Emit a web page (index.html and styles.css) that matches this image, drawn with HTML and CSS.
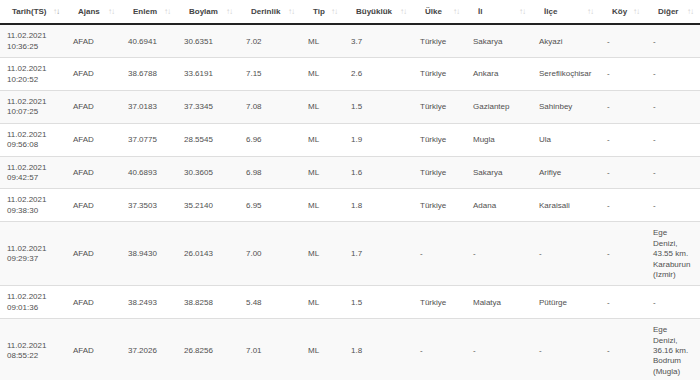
FILE: index.html
```html
<!DOCTYPE html>
<html lang="tr">
<head>
<meta charset="utf-8">
<title>Depremler</title>
<link rel="stylesheet" href="styles.css">
</head>
<body>
<table class="quakes">
  <colgroup>
    <col class="c1"><col class="c2"><col class="c3"><col class="c4"><col class="c5"><col class="c6">
    <col class="c7"><col class="c8"><col class="c9"><col class="c10"><col class="c11"><col class="c12">
  </colgroup>
  <thead>
    <tr>
      <th class="sorted">Tarih(TS)<span class="sort"><i class="up">↑</i><i class="dn">↓</i></span></th>
      <th>Ajans<span class="sort"><i class="up">↑</i><i class="dn">↓</i></span></th>
      <th>Enlem<span class="sort"><i class="up">↑</i><i class="dn">↓</i></span></th>
      <th>Boylam<span class="sort"><i class="up">↑</i><i class="dn">↓</i></span></th>
      <th>Derinlik<span class="sort"><i class="up">↑</i><i class="dn">↓</i></span></th>
      <th>Tip<span class="sort"><i class="up">↑</i><i class="dn">↓</i></span></th>
      <th>Büyüklük<span class="sort"><i class="up">↑</i><i class="dn">↓</i></span></th>
      <th>Ülke<span class="sort"><i class="up">↑</i><i class="dn">↓</i></span></th>
      <th>İl<span class="sort"><i class="up">↑</i><i class="dn">↓</i></span></th>
      <th>İlçe<span class="sort"><i class="up">↑</i><i class="dn">↓</i></span></th>
      <th>Köy<span class="sort"><i class="up">↑</i><i class="dn">↓</i></span></th>
      <th>Diğer<span class="sort"><i class="up">↑</i><i class="dn">↓</i></span></th>
    </tr>
  </thead>
  <tbody>
    <tr><td>11.02.2021 10:36:25</td><td>AFAD</td><td>40.6941</td><td>30.6351</td><td>7.02</td><td>ML</td><td>3.7</td><td>Türkiye</td><td>Sakarya</td><td>Akyazi</td><td>-</td><td>-</td></tr>
    <tr><td>11.02.2021 10:20:52</td><td>AFAD</td><td>38.6788</td><td>33.6191</td><td>7.15</td><td>ML</td><td>2.6</td><td>Türkiye</td><td>Ankara</td><td>Sereflikoçhisar</td><td>-</td><td>-</td></tr>
    <tr><td>11.02.2021 10:07:25</td><td>AFAD</td><td>37.0183</td><td>37.3345</td><td>7.08</td><td>ML</td><td>1.5</td><td>Türkiye</td><td>Gaziantep</td><td>Sahinbey</td><td>-</td><td>-</td></tr>
    <tr><td>11.02.2021 09:56:08</td><td>AFAD</td><td>37.0775</td><td>28.5545</td><td>6.96</td><td>ML</td><td>1.9</td><td>Türkiye</td><td>Mugla</td><td>Ula</td><td>-</td><td>-</td></tr>
    <tr><td>11.02.2021 09:42:57</td><td>AFAD</td><td>40.6893</td><td>30.3605</td><td>6.98</td><td>ML</td><td>1.6</td><td>Türkiye</td><td>Sakarya</td><td>Arifiye</td><td>-</td><td>-</td></tr>
    <tr><td>11.02.2021 09:38:30</td><td>AFAD</td><td>37.3503</td><td>35.2140</td><td>6.95</td><td>ML</td><td>1.8</td><td>Türkiye</td><td>Adana</td><td>Karaisali</td><td>-</td><td>-</td></tr>
    <tr><td>11.02.2021 09:29:37</td><td>AFAD</td><td>38.9430</td><td>26.0143</td><td>7.00</td><td>ML</td><td>1.7</td><td>-</td><td>-</td><td>-</td><td>-</td><td>Ege Denizi, 43.55 km. Karaburun (Izmir)</td></tr>
    <tr><td>11.02.2021 09:01:36</td><td>AFAD</td><td>38.2493</td><td>38.8258</td><td>5.48</td><td>ML</td><td>1.5</td><td>Türkiye</td><td>Malatya</td><td>Pütürge</td><td>-</td><td>-</td></tr>
    <tr><td>11.02.2021 08:55:22</td><td>AFAD</td><td>37.2026</td><td>26.8256</td><td>7.01</td><td>ML</td><td>1.8</td><td>-</td><td>-</td><td>-</td><td>-</td><td>Ege Denizi, 36.16 km. Bodrum (Mugla)</td></tr>
  </tbody>
</table>
</body>
</html>
```

FILE: styles.css
```css
html, body {
  margin: 0;
  padding: 0;
  background: #ffffff;
}

body {
  font-family: "Liberation Sans", Arial, sans-serif;
  font-size: 8px;
  line-height: 10.4px;
  color: #505050;
}

.quakes {
  width: 700px;
  table-layout: fixed;
  border-collapse: collapse;
  border-spacing: 0;
}

.c1 { width: 66px; }
.c2 { width: 55px; }
.c3 { width: 56px; }
.c4 { width: 62px; }
.c5 { width: 62px; }
.c6 { width: 43px; }
.c7 { width: 69px; }
.c8 { width: 53px; }
.c9 { width: 66px; }
.c10 { width: 68px; }
.c11 { width: 46px; }
.c12 { width: 54px; }

.quakes th {
  position: relative;
  text-align: left;
  font-weight: bold;
  color: #444444;
  padding: 7px 16px 6px 12px;
  border-bottom: 2px solid #222;
  vertical-align: middle;
  white-space: nowrap;
}

.sort {
  position: absolute;
  right: 7px;
  top: 7px;
  font-style: normal;
  letter-spacing: -1px;
}

.sort i {
  font-style: normal;
  color: #d0d0d0;
}

.sorted .sort .dn {
  color: #9a9a9a;
}

.quakes td {
  padding: 6px 8px 5px 7px;
  border-top: 1px solid #dedede;
  vertical-align: middle;
  word-wrap: break-word;
}

.quakes tbody tr:first-child td {
  border-top: none;
}

.quakes tbody tr:nth-child(odd) {
  background: #f9f9f9;
}
```
